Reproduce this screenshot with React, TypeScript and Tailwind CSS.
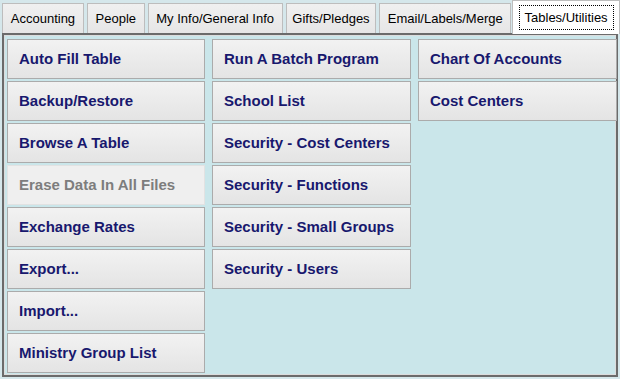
const tabs = [
  { label: "Accounting", w: "w-[82px]" },
  { label: "People", w: "w-[58px]" },
  { label: "My Info/General Info", w: "w-[135px]" },
  { label: "Gifts/Pledges", w: "w-[91px]" },
  { label: "Email/Labels/Merge", w: "w-[132px]" },
];

const columns: { label: string; disabled?: boolean }[][] = [
  [
    { label: "Auto Fill Table" },
    { label: "Backup/Restore" },
    { label: "Browse A Table" },
    { label: "Erase Data In All Files", disabled: true },
    { label: "Exchange Rates" },
    { label: "Export..." },
    { label: "Import..." },
    { label: "Ministry Group List" },
  ],
  [
    { label: "Run A Batch Program" },
    { label: "School List" },
    { label: "Security - Cost Centers" },
    { label: "Security - Functions" },
    { label: "Security - Small Groups" },
    { label: "Security - Users" },
  ],
  [{ label: "Chart Of Accounts" }, { label: "Cost Centers" }],
];

function MenuButton({ label, disabled }: { label: string; disabled?: boolean }) {
  return (
    <div
      className={
        disabled
          ? "h-[40px] flex items-center pl-[11px] border border-[#e2e2e2] bg-[#efefef] text-[#7d7d7d] font-bold text-[15px]"
          : "h-[40px] flex items-center pl-[11px] border border-[#ababab] bg-gradient-to-b from-[#f2f2f2] to-[#e4e4e4] text-[#18186e] font-bold text-[15px]"
      }
    >
      {label}
    </div>
  );
}

export default function App() {
  return (
    <div
      className="w-[620px] h-[379px] bg-[#d5e7eb] overflow-hidden"
      style={{ fontFamily: '"Liberation Sans", Arial, sans-serif' }}
    >
      {/* Tabs */}
      <div className="flex items-end h-[33px] pl-[2px] gap-[3px]">
        {tabs.map((t) => (
          <div
            key={t.label}
            className={`${t.w} h-[30px] flex items-center justify-center pt-[1px] border border-b-0 border-[#bdbdbd] bg-gradient-to-b from-[#f0f0f0] to-[#e6e6e6] text-[13px] text-black`}
          >
            {t.label}
          </div>
        ))}
        <div className="relative z-10 -ml-[2px] w-[108px] h-[34px] -mb-[1px] flex items-center justify-center bg-white border border-b-0 border-[#bdbdbd]">
          <span className="px-[5px] py-[2px] border border-dotted border-black text-[13px] text-black">
            Tables/Utilities
          </span>
        </div>
      </div>

      {/* Panel */}
      <div className="ml-[2px] w-[616px] h-[344px] border-2 border-[#6b6b6b] bg-[#cae6ea]">
        <div className="h-full border border-[#dcdcdc] p-[2px] pt-[3px]">
          <div className="grid grid-cols-[198px_199px_199px] gap-x-[7px]">
            {columns.map((col, i) => (
              <div key={i} className="flex flex-col gap-[2px]">
                {col.map((b) => (
                  <MenuButton key={b.label} {...b} />
                ))}
              </div>
            ))}
          </div>
        </div>
      </div>
    </div>
  );
}
